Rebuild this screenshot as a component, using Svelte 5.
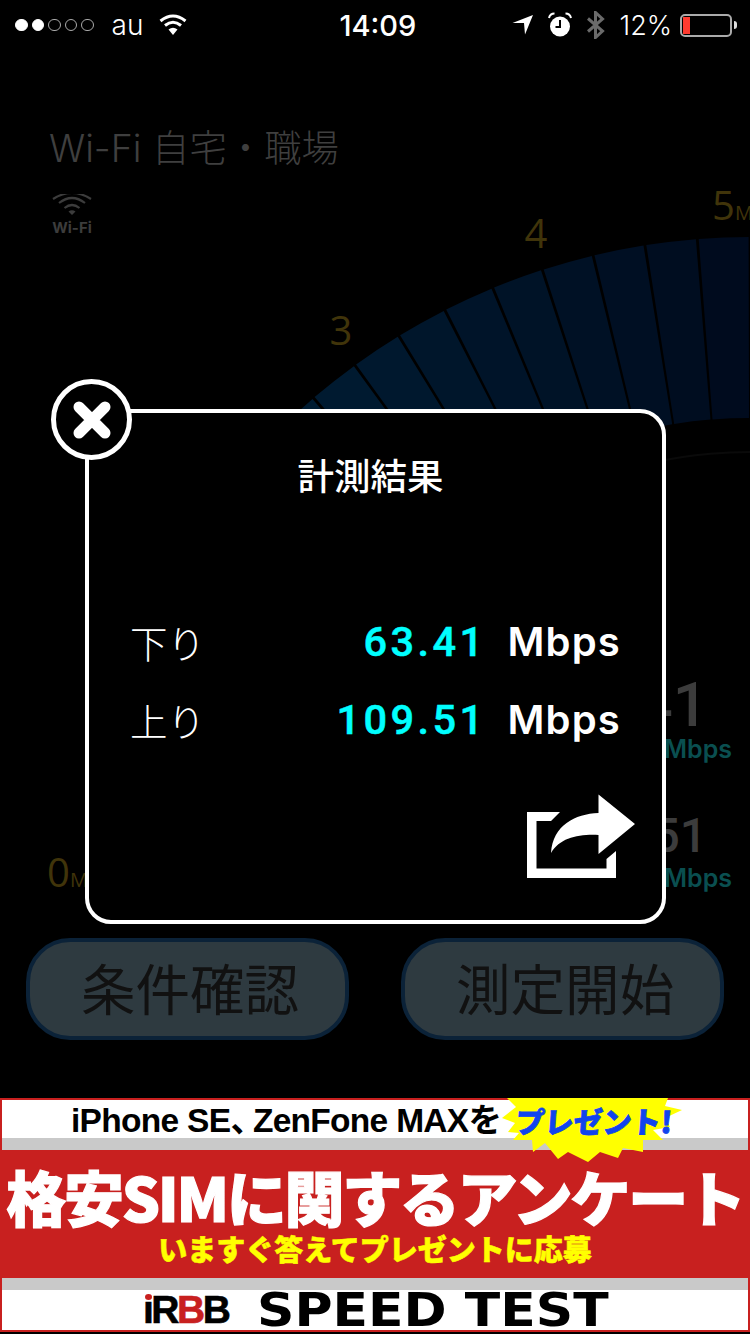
<script>
  const CX = 750
  const CY = 909
  const OUTER = 672
  const INNER = 491
  const STEP = 4.5

  function polar(r, deg) {
    const a = (deg * Math.PI) / 180
    return `${(CX + r * Math.sin(a)).toFixed(1)} ${(CY - r * Math.cos(a)).toFixed(1)}`
  }

  function cellColor(deg) {
    const t = Math.min(1, Math.max(0, -deg / 45))
    const g = Math.round(9 + t * 19)
    const b = Math.round(28 + t * 22)
    return `rgb(0, ${g}, ${b})`
  }

  // one gauge cell every 4.5 degrees, 0 is straight up
  const cells = []
  for (let i = -14; i < 2; i++) {
    const from = i * STEP + 0.12
    const to = (i + 1) * STEP - 0.12
    cells.push({
      d: `M${polar(OUTER, from)} A${OUTER} ${OUTER} 0 0 1 ${polar(OUTER, to)} L${polar(INNER, to)} A${INNER} ${INNER} 0 0 0 ${polar(INNER, from)} Z`,
      fill: cellColor(i * STEP)
    })
  }

  const burst = '507,1098 516,1107 502,1118 515,1123 508,1132 519,1133 513,1140 532,1140 533,1152 545,1143 558,1159 568,1152 588,1162 600,1152 618,1158 623,1148 643,1152 643,1140 663,1140 653,1130 670,1127 665,1118 682,1110 665,1106 668,1098'

  const results = [
    { label: '下り', value: '63.41' },
    { label: '上り', value: '109.51' }
  ]
</script>

<div class="page">
  <svg class="canvas" viewBox="0 0 750 1334" width="750" height="1334">
    {#each cells as c}
      <path d={c.d} fill={c.fill} />
    {/each}
    <path d="M{polar(457, -20)} A457 457 0 0 1 {polar(457, 10)}" fill="none" stroke="#0a0a0a" stroke-width="2" />
    <text class="tick" x="341" y="345">3</text>
    <text class="tick" x="536" y="248">4</text>
    <text class="tick start" x="712" y="220">5<tspan class="unit">M</tspan></text>
    <text class="tick start" x="47" y="887">0<tspan class="unit">M</tspan></text>
    <text class="speed big" x="708" y="726">63.41</text>
    <text class="mbps" x="732" y="758">Mbps</text>
    <text class="speed" x="707" y="852">109.51</text>
    <text class="mbps" x="732" y="887">Mbps</text>
  </svg>

  <header class="status">
    <div class="carrier">
      <div class="dots">
        <i class="on"></i><i class="on"></i><i></i><i></i><i></i>
      </div>
      <span>au</span>
      <svg width="28" height="22" viewBox="0 0 28 22">
        <path d="M14 21 L9.5 15.5 Q14 12 18.5 15.5 Z" fill="#fff" />
        <path d="M6 11.5 Q14 5 22 11.5" fill="none" stroke="#fff" stroke-width="3" />
        <path d="M1.5 7 Q14 -3 26.5 7" fill="none" stroke="#fff" stroke-width="3" />
      </svg>
    </div>
    <div class="time">14:09</div>
    <div class="system">
      <svg width="22" height="20" viewBox="0 0 22 20">
        <path d="M0.5 8 L21 0 L13 19.5 L12 8 Z" fill="#fff" />
      </svg>
      <svg class="alarm" width="24" height="26" viewBox="0 0 24 26">
        <circle cx="12" cy="14.5" r="10" fill="#fff" />
        <path d="M12 8 V15 H7.5" fill="none" stroke="#000" stroke-width="2" />
        <path d="M1 6 Q2 1.5 6.5 1.5 M23 6 Q22 1.5 17.5 1.5" fill="none" stroke="#fff" stroke-width="2" />
      </svg>
      <svg class="bt" width="20" height="28" viewBox="0 0 20 28">
        <path d="M2 7.5 L16.5 20 L9.5 26.5 V1.5 L16.5 8 L2 20.5" fill="none" stroke="#6a6a6a" stroke-width="3" />
      </svg>
      <span class="pct">12%</span>
      <div class="battery"><div class="charge"></div></div>
      <div class="nub"></div>
    </div>
  </header>

  <section class="network">
    <h1>Wi-Fi 自宅・職場</h1>
    <div class="wifi-mark">
      <svg width="40" height="22" viewBox="0 0 40 22">
        <path d="M20 21 L16.5 17.5 Q20 15 23.5 17.5 Z" fill="#3c3c3c" />
        <path d="M12.5 14 Q20 8 27.5 14" fill="none" stroke="#3c3c3c" stroke-width="2.2" />
        <path d="M7 9 Q20 -1 33 9" fill="none" stroke="#3c3c3c" stroke-width="2.2" />
        <path d="M1 5 Q20 -7 39 5" fill="none" stroke="#3c3c3c" stroke-width="2.2" />
      </svg>
      <span>Wi-Fi</span>
    </div>
  </section>

  <div class="actions">
    <button>条件確認</button>
    <button>測定開始</button>
  </div>

  <aside class="ad">
    <div class="ad-top">iPhone SE<span class="comma">、</span>ZenFone MAXを</div>
    <div class="ad-band"></div>
    <div class="ad-main">
      <strong>格安SIMに関するアンケート</strong>
      <em>いますぐ答えてプレゼントに応募</em>
    </div>
    <div class="ad-band"></div>
    <div class="ad-foot">
      <span class="rbb"><span class="rbb-i">ı</span>R<span class="red">B</span>B</span>
      <span class="speedtest">SPEED TEST</span>
    </div>
  </aside>

  <svg class="burst" viewBox="0 0 750 1334" width="750" height="1334">
    <polygon points={burst} fill="#ffff00" />
  </svg>
  <div class="present">プレゼント!</div>

  <div class="modal">
    <h2>計測結果</h2>
    <div class="rows">
      {#each results as r}
        <div class="row">
          <span class="label">{r.label}</span>
          <span class="value">{r.value}</span>
          <span class="unit-text">Mbps</span>
        </div>
      {/each}
    </div>
    <svg class="share" width="110" height="86" viewBox="526 793 110 86">
      <path d="M527 812 H560 L551 821 H536.5 V868.5 H606.5 V859 L616 851 V878 H527 Z" fill="#fff" />
      <path d="M635 824 L598.5 794.5 V813 C575 814 553 825 551 853 C560 838 578 834 598.5 835 V854 Z" fill="#fff" />
    </svg>
  </div>

  <button class="close" aria-label="閉じる">
    <svg width="40" height="40" viewBox="0 0 40 40">
      <path d="M7 7 L33 33 M33 7 L7 33" stroke="#fff" stroke-width="11" stroke-linecap="round" />
    </svg>
  </button>
</div>

<style>
  :global(body) {
    background: #000;
  }

  .page {
    position: relative;
    width: 750px;
    height: 1334px;
    overflow: hidden;
    background: #000;
    display: flex;
    flex-direction: column;
    font-family: "Inter", "Noto Sans CJK JP", sans-serif;
    color: #fff;
  }

  .canvas,
  .burst {
    position: absolute;
    top: 0;
    left: 0;
  }

  .tick {
    font-family: "Open Sans", sans-serif;
    font-size: 40px;
    fill: #40340a;
    text-anchor: middle;
  }

  .tick.start {
    text-anchor: start;
  }

  .tick .unit {
    font-size: 20px;
  }

  .speed {
    font-family: "Roboto", sans-serif;
    font-weight: 500;
    font-size: 48px;
    fill: #3c3c3c;
    text-anchor: end;
  }

  .speed.big {
    font-size: 62px;
  }

  .mbps {
    font-family: "Inter", sans-serif;
    font-weight: 600;
    font-size: 25px;
    fill: #0a4f50;
    text-anchor: end;
  }

  .status {
    position: relative;
    height: 50px;
    display: flex;
    align-items: center;
    padding: 0 13px 0 15px;
    font-size: 27px;
  }

  .carrier {
    display: flex;
    align-items: center;
  }

  .carrier span {
    margin: 0 16px 0 18px;
    font-weight: 300;
    font-size: 28px;
  }

  .dots {
    display: flex;
    gap: 4px;
  }

  .dots i {
    width: 12.5px;
    height: 12.5px;
    box-sizing: border-box;
    border-radius: 50%;
    border: 1.2px solid #aaa;
  }

  .dots i.on {
    background: #fff;
    border-color: #fff;
  }

  .time {
    margin-left: 152px;
    font-size: 29px;
    font-weight: 500;
  }

  .system {
    margin-left: auto;
    display: flex;
    align-items: center;
  }

  .alarm {
    margin-left: 14px;
  }

  .bt {
    margin-left: 14px;
  }

  .pct {
    margin-left: 14px;
    font-weight: 300;
  }

  .battery {
    margin-left: 8px;
    width: 52px;
    height: 23px;
    box-sizing: border-box;
    border: 2px solid #aaa;
    border-radius: 5px;
    padding: 1px;
  }

  .charge {
    width: 7px;
    height: 100%;
    background: #ff3b30;
  }

  .nub {
    width: 3px;
    height: 8px;
    margin-left: 2px;
    background: #ddd;
    border-radius: 0 3px 3px 0;
  }

  .network {
    position: relative;
    padding: 77px 0 0 49px;
    color: #3f3f3f;
  }

  h1 {
    margin: 0;
    font-size: 37.4px;
    line-height: 44px;
    font-weight: 300;
  }

  .wifi-mark {
    margin: 23px 0 0 3px;
    width: 40px;
    display: flex;
    flex-direction: column;
    align-items: center;
    gap: 4px;
    font-size: 15px;
    line-height: 16px;
    font-weight: 700;
    color: #3c3c3c;
  }

  .actions {
    position: relative;
    margin-top: auto;
    margin-bottom: 58px;
    padding: 0 26px;
    display: flex;
    justify-content: space-between;
  }

  .actions button {
    width: 323px;
    height: 102px;
    box-sizing: border-box;
    border: 4px solid #0b2238;
    border-radius: 44px;
    background: #2e3a40;
    color: #111;
    font-family: "Noto Sans CJK JP", sans-serif;
    font-size: 54.5px;
    padding: 0 0 6px 5px;
  }

  .ad {
    position: relative;
    height: 234px;
    margin-bottom: 2px;
    box-sizing: border-box;
    border: 2px solid #c8201f;
    display: flex;
    flex-direction: column;
    background: #fff;
  }

  .ad-top {
    height: 38px;
    color: #000;
    font-family: "Liberation Sans", "Noto Sans CJK JP", sans-serif;
    font-weight: 700;
    font-size: 33.5px;
    letter-spacing: -0.7px;
    line-height: 42px;
    padding-left: 69px;
    white-space: nowrap;
  }

  .comma {
    letter-spacing: -11px;
  }

  .ad-band {
    height: 12px;
    background: #c9c9c9;
  }

  .ad-main {
    flex: 1;
    background: #c8201f;
    display: flex;
    flex-direction: column;
    align-items: center;
    font-family: "Noto Sans CJK JP", sans-serif;
    font-weight: 900;
    white-space: nowrap;
  }

  .ad-main strong {
    margin-top: 15px;
    font-size: 60px;
    line-height: 62px;
    font-weight: 900;
    letter-spacing: -2.3px;
    color: #fff;
    -webkit-text-stroke: 1.2px #fff;
  }

  .ad-main em {
    font-style: normal;
    font-size: 29px;
    line-height: 36px;
    color: #ffff00;
    margin-top: 3px;
    -webkit-text-stroke: 0.5px #ffff00;
  }

  .ad-foot {
    height: 40px;
    display: flex;
    align-items: center;
    padding-left: 141px;
    color: #000;
    white-space: nowrap;
  }

  .rbb {
    font-family: "Liberation Sans", sans-serif;
    font-weight: 700;
    font-size: 39px;
    letter-spacing: -2.5px;
    width: 114px;
    -webkit-text-stroke: 0.6px currentColor;
  }

  .rbb-i {
    position: relative;
  }

  .rbb-i::after {
    content: "";
    position: absolute;
    top: 6px;
    left: 2px;
    width: 7px;
    height: 6px;
    border-radius: 50%;
    background: #c8201f;
  }

  .red {
    color: #c8201f;
  }

  .speedtest {
    font-family: "DejaVu Sans", sans-serif;
    font-weight: 700;
    font-size: 46px;
    line-height: 40px;
    transform: scaleX(1.13);
    transform-origin: left center;
  }

  .present {
    position: absolute;
    left: 516px;
    top: 1098px;
    color: #1144ee;
    font-family: "Noto Sans CJK JP", sans-serif;
    font-weight: 900;
    font-size: 29px;
    line-height: 44px;
    white-space: nowrap;
    transform: skewX(-4deg);
    -webkit-text-stroke: 0.8px #1144ee;
  }

  .modal {
    position: absolute;
    left: 85px;
    top: 409px;
    width: 581px;
    height: 515px;
    box-sizing: border-box;
    border: 4.5px solid #fff;
    border-radius: 26px;
    background: #000;
    display: flex;
    flex-direction: column;
  }

  h2 {
    margin: 36px 0 0;
    padding-right: 10px;
    text-align: center;
    font-family: "Noto Sans CJK JP", sans-serif;
    font-size: 36.5px;
    line-height: 52px;
    font-weight: 500;
  }

  .rows {
    margin-top: 112px;
    padding: 0 41px;
    display: flex;
    flex-direction: column;
    gap: 22px;
  }

  .row {
    height: 56px;
    display: flex;
    align-items: center;
  }

  .label {
    font-family: "Noto Sans CJK JP", sans-serif;
    font-weight: 300;
    font-size: 37.5px;
  }

  .value {
    margin-left: auto;
    color: #00ffff;
    font-family: "Roboto", sans-serif;
    font-size: 41.5px;
    font-weight: 500;
    letter-spacing: 3.4px;
    -webkit-text-stroke: 0.5px #00ffff;
  }

  .unit-text {
    margin-left: 21px;
    font-size: 40px;
    font-weight: 600;
    letter-spacing: 1.2px;
  }

  .share {
    margin: auto 26px 41px auto;
  }

  .close {
    position: absolute;
    left: 51px;
    top: 379px;
    width: 81px;
    height: 81px;
    box-sizing: border-box;
    border: 5.5px solid #fff;
    border-radius: 50%;
    background: #000;
    padding: 0;
    display: flex;
    align-items: center;
    justify-content: center;
  }
</style>
